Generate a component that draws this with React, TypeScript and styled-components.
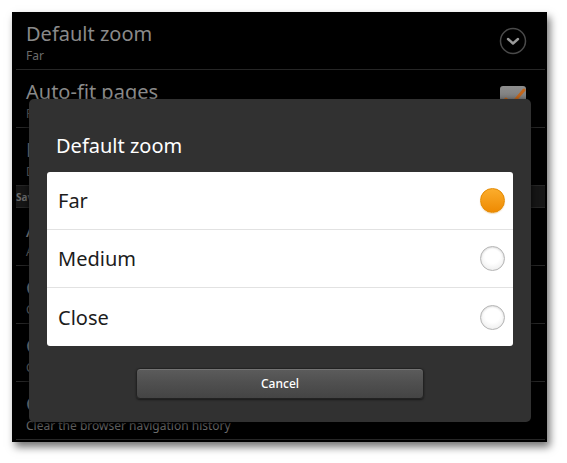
import React from "react";
import styled, { createGlobalStyle } from "styled-components";

const GlobalStyle = createGlobalStyle`
  html, body { margin: 0; padding: 0; background: #ffffff; }
  body { font-family: "Noto Sans", "Open Sans", "DejaVu Sans", sans-serif; }
  * { box-sizing: border-box; }
`;

const Page = styled.div`
  width: 567px;
  height: 463px;
  padding: 12px 20px 21px 12px;
  background: #ffffff;
`;

const Screen = styled.div`
  position: relative;
  width: 535px;
  height: 430px;
  background: #000;
  overflow: hidden;
  box-shadow: 3px 5px 8px rgba(0, 0, 0, 0.55);
`;

const SettingsList = styled.div`
  display: flex;
  flex-direction: column;
`;

const SettingRow = styled.div`
  height: 58px;
  margin: 0 2px 0 4px;
  padding: 0 17px 0 10px;
  display: flex;
  align-items: flex-start;
  justify-content: space-between;
  border-bottom: 1px solid #262626;
`;

const SettingText = styled.div`
  display: flex;
  flex-direction: column;
  padding-top: 9px;
`;

const SettingTitle = styled.div`
  font-size: 20px;
  line-height: 26px;
  color: #8a8a8a;
  white-space: nowrap;
`;

const SettingSummary = styled.div`
  margin-top: 2px;
  font-size: 12px;
  line-height: 14px;
  color: #6c6c6c;
  white-space: nowrap;
`;

const SettingWidget = styled.div`
  width: 30px;
  height: 57px;
  display: flex;
  align-items: center;
  justify-content: center;
`;

const SectionHeader = styled.div`
  height: 22px;
  margin: 0 2px 0 4px;
  display: flex;
  align-items: center;
  background: #161616;
  border-bottom: 1px solid #262626;
  font-size: 10px;
  font-weight: 700;
  color: #6a6a6a;
`;

const Dialog = styled.div`
  position: absolute;
  left: 17px;
  top: 87px;
  width: 502px;
  display: flex;
  flex-direction: column;
  background: #313131;
  border-radius: 5px;
  box-shadow: 0 2px 6px rgba(0, 0, 0, 0.8);
`;

const DialogTitle = styled.div`
  padding: 35px 27px 14px;
  font-size: 20px;
  line-height: 24px;
  color: #ffffff;
`;

const ChoiceList = styled.div`
  margin: 0 18px;
  background: #ffffff;
  border-radius: 3px;
  display: flex;
  flex-direction: column;
`;

const ChoiceRow = styled.div<{ $last?: boolean }>`
  height: 58px;
  padding: 0 8px 0 11px;
  display: flex;
  align-items: center;
  justify-content: space-between;
  border-bottom: ${(p) => (p.$last ? "none" : "1px solid #e2e2e2")};
`;

const ChoiceLabel = styled.span`
  font-size: 20px;
  color: #1c1c1c;
`;

const Radio = styled.span<{ $checked?: boolean }>`
  width: 25px;
  height: 25px;
  border-radius: 50%;
  border: 1px solid ${(p) => (p.$checked ? "#e48a00" : "#b4b4b4")};
  background: ${(p) =>
    p.$checked
      ? "linear-gradient(#fbad2c, #ef8a02)"
      : "radial-gradient(circle at 50% 40%, #ffffff 40%, #e6e6e6 100%)"};
  box-shadow: ${(p) =>
    p.$checked ? "0 1px 1px rgba(200,120,0,0.25)" : "inset 0 1px 2px rgba(0,0,0,0.12)"};
`;

const ButtonBar = styled.div`
  padding: 22px 0 23px;
  display: flex;
  justify-content: center;
`;

const CancelButton = styled.button`
  width: 288px;
  height: 31px;
  border-radius: 4px;
  border: 1px solid #222;
  background: linear-gradient(#5c5c5c 0%, #505050 45%, #444444 100%);
  box-shadow: inset 0 1px 0 rgba(255, 255, 255, 0.15), 0 1px 2px rgba(0, 0, 0, 0.5);
  color: #ffffff;
  font-family: "Noto Sans", "Open Sans", sans-serif;
  font-size: 12px;
  font-weight: 500;
  padding: 0;
`;

const ExpandIcon = () => (
  <svg width="28" height="28" viewBox="0 0 28 28">
    <circle cx="14" cy="14" r="12.5" fill="none" stroke="#4a4a4a" strokeWidth="1.5" />
    <path d="M9 12 L14 16.5 L19 12" fill="none" stroke="#9a9a9a" strokeWidth="2.4" strokeLinecap="round" strokeLinejoin="round" />
  </svg>
);

const CheckIcon = () => (
  <svg width="30" height="30" viewBox="0 0 30 30">
    <defs>
      <linearGradient id="cb" x1="0" y1="0" x2="0" y2="1">
        <stop offset="0" stopColor="#8e8e8e" />
        <stop offset="1" stopColor="#6a6a6a" />
      </linearGradient>
    </defs>
    <rect x="2" y="2" width="26" height="26" rx="3" fill="url(#cb)" />
    <path d="M8 15 L13 21 L26 6" fill="none" stroke="#c2661c" strokeWidth="3" strokeLinecap="round" />
  </svg>
);

const settings = [
  { title: "Default zoom", summary: "Far", widget: "expand" },
  { title: "Auto-fit pages", summary: "Format web pages to fit the screen", widget: "check" },
  { title: "Desktop view", summary: "Display full desktop versions of pages", widget: "" },
];

const privacy = [
  { title: "Accept cookies", summary: "Allow sites to save and read cookie data" },
  { title: "Clear cache", summary: "Clear locally cached content and databases" },
  { title: "Clear all cookie data", summary: "Clear all browser cookies" },
  { title: "Clear history", summary: "Clear the browser navigation history" },
];

const choices = ["Far", "Medium", "Close"];

export default function App() {
  return (
    <>
      <GlobalStyle />
      <Page>
        <Screen>
          <SettingsList>
            {settings.map((s) => (
              <SettingRow key={s.title}>
                <SettingText>
                  <SettingTitle>{s.title}</SettingTitle>
                  <SettingSummary>{s.summary}</SettingSummary>
                </SettingText>
                <SettingWidget>
                  {s.widget === "expand" && <ExpandIcon />}
                  {s.widget === "check" && <CheckIcon />}
                </SettingWidget>
              </SettingRow>
            ))}
            <SectionHeader>Saved data settings</SectionHeader>
            {privacy.map((s) => (
              <SettingRow key={s.title}>
                <SettingText>
                  <SettingTitle>{s.title}</SettingTitle>
                  <SettingSummary>{s.summary}</SettingSummary>
                </SettingText>
              </SettingRow>
            ))}
          </SettingsList>
          <Dialog>
            <DialogTitle>Default zoom</DialogTitle>
            <ChoiceList>
              {choices.map((c, i) => (
                <ChoiceRow key={c} $last={i === choices.length - 1}>
                  <ChoiceLabel>{c}</ChoiceLabel>
                  <Radio $checked={i === 0} />
                </ChoiceRow>
              ))}
            </ChoiceList>
            <ButtonBar>
              <CancelButton>Cancel</CancelButton>
            </ButtonBar>
          </Dialog>
        </Screen>
      </Page>
    </>
  );
}
